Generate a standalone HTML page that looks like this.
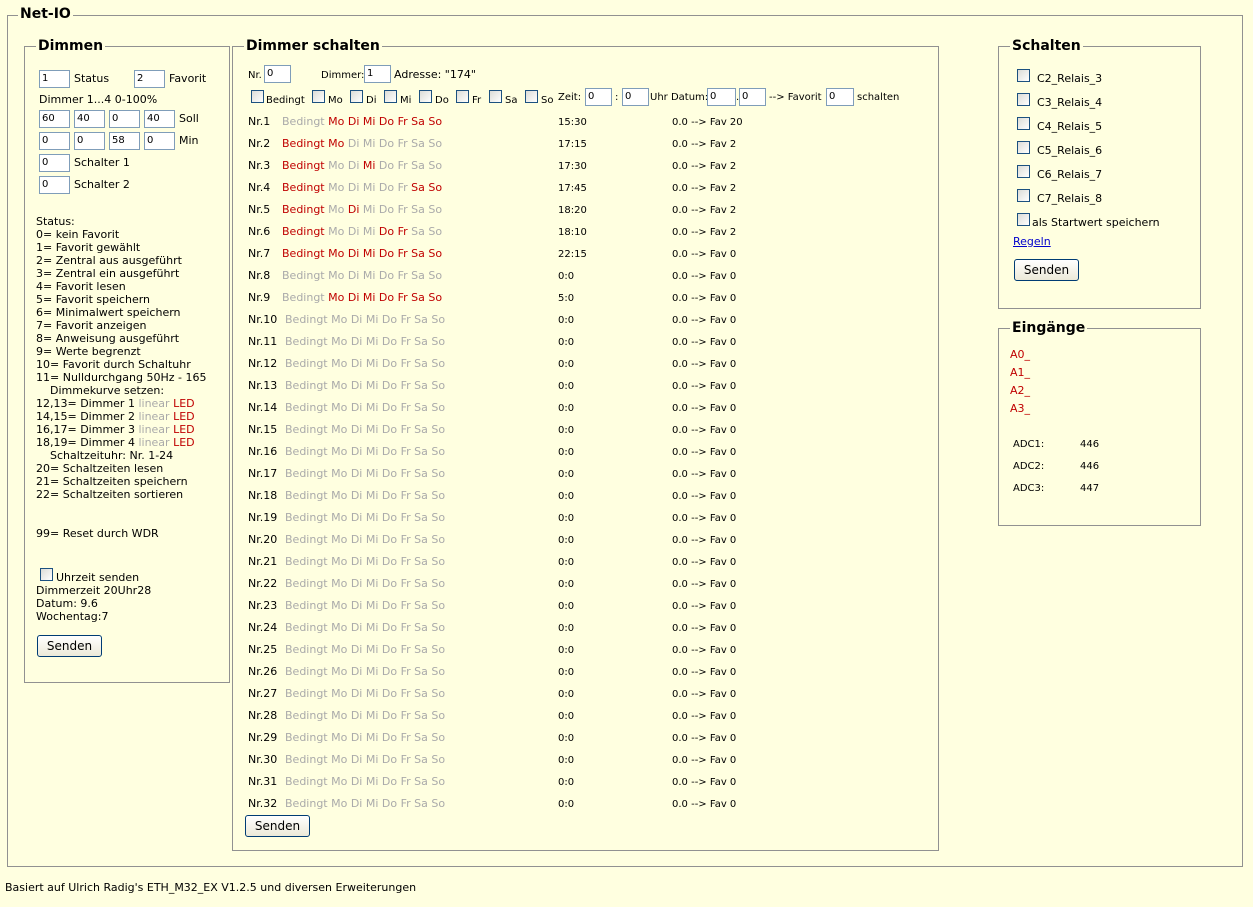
<!DOCTYPE html>
<html><head><meta charset="utf-8"><style>
body{margin:0;width:1253px;height:907px;background:#ffffe0;font-family:"DejaVu Sans","Liberation Sans",sans-serif;font-size:11px;color:#000;position:relative;overflow:hidden}
.fs{position:absolute;border:1px solid #919191;box-sizing:border-box}
.lg{position:absolute;background:#ffffe0;padding:0 2px;font-weight:bold;font-size:14px;line-height:16px;white-space:nowrap}
.t{position:absolute;white-space:nowrap;line-height:13px}
.in{position:absolute;border:1px solid #7f9db9;background:#fff;box-sizing:border-box;height:18px;font-size:10px;line-height:16px;padding-left:2px}
.cb{position:absolute;width:13px;height:13px;border:1px solid #1c5180;background:linear-gradient(135deg,#dcdcd7,#fff);box-sizing:border-box}
.btn{position:absolute;border:1px solid #003c74;border-radius:3px;background:linear-gradient(#fff,#ece9d8);font-size:12px;text-align:center;line-height:20px;height:22px;box-sizing:border-box}
.g{color:#aaa}.r{color:#c00000}
</style></head><body>
<div class="fs" style="left:7px;top:15px;width:1236px;height:852px"></div>
<div class="lg" style="left:18px;top:6px">Net-IO</div>

<!-- Dimmen -->
<div class="fs" style="left:24px;top:46px;width:206px;height:637px"></div>
<div class="lg" style="left:36px;top:38px">Dimmen</div>
<div class="in" style="left:39px;top:70px;width:31px">1</div><div class="t" style="left:74px;top:72px">Status</div>
<div class="in" style="left:134px;top:70px;width:31px">2</div><div class="t" style="left:169px;top:72px">Favorit</div>
<div class="t" style="left:39px;top:93px">Dimmer 1...4 0-100%</div>
<div class="in" style="left:39px;top:110px;width:31px">60</div><div class="in" style="left:74px;top:110px;width:31px">40</div><div class="in" style="left:109px;top:110px;width:31px">0</div><div class="in" style="left:144px;top:110px;width:31px">40</div><div class="t" style="left:179px;top:112px">Soll</div>
<div class="in" style="left:39px;top:132px;width:31px">0</div><div class="in" style="left:74px;top:132px;width:31px">0</div><div class="in" style="left:109px;top:132px;width:31px">58</div><div class="in" style="left:144px;top:132px;width:31px">0</div><div class="t" style="left:179px;top:134px">Min</div>
<div class="in" style="left:39px;top:154px;width:31px">0</div><div class="t" style="left:74px;top:156px">Schalter 1</div>
<div class="in" style="left:39px;top:176px;width:31px">0</div><div class="t" style="left:74px;top:178px">Schalter 2</div>
<div class="t" style="left:36px;top:215px">Status:<br>0= kein Favorit<br>1= Favorit gewählt<br>2= Zentral aus ausgeführt<br>3= Zentral ein ausgeführt<br>4= Favorit lesen<br>5= Favorit speichern<br>6= Minimalwert speichern<br>7= Favorit anzeigen<br>8= Anweisung ausgeführt<br>9= Werte begrenzt<br>10= Favorit durch Schaltuhr<br>11= Nulldurchgang 50Hz - 165<br>&nbsp;&nbsp;&nbsp;&nbsp;Dimmekurve setzen:<br>12,13= Dimmer 1 <span class="g">linear</span> <span class="r">LED</span><br>14,15= Dimmer 2 <span class="g">linear</span> <span class="r">LED</span><br>16,17= Dimmer 3 <span class="g">linear</span> <span class="r">LED</span><br>18,19= Dimmer 4 <span class="g">linear</span> <span class="r">LED</span><br>&nbsp;&nbsp;&nbsp;&nbsp;Schaltzeituhr: Nr. 1-24<br>20= Schaltzeiten lesen<br>21= Schaltzeiten speichern<br>22= Schaltzeiten sortieren</div>
<div class="t" style="left:36px;top:527px">99= Reset durch WDR</div>
<div class="cb" style="left:40px;top:568px"></div><div class="t" style="left:56px;top:571px">Uhrzeit senden</div>
<div class="t" style="left:36px;top:584px">Dimmerzeit 20Uhr28<br>Datum: 9.6<br>Wochentag:7</div>
<div class="btn" style="left:37px;top:635px;width:65px">Senden</div>

<!-- Dimmer schalten -->
<div class="fs" style="left:232px;top:46px;width:707px;height:805px"></div>
<div class="lg" style="left:244px;top:38px">Dimmer schalten</div>
<div class="t" style="left:248px;top:69px;font-size:10px">Nr.</div><div class="in" style="left:264px;top:65px;width:27px">0</div>
<div class="t" style="left:321px;top:69px;font-size:10px">Dimmer:</div><div class="in" style="left:364px;top:65px;width:27px">1</div>
<div class="t" style="left:394px;top:68px">Adresse: "174"</div>
<div class="cb" style="left:251px;top:90px"></div><div class="t" style="left:266px;top:94px;font-size:10px">Bedingt</div>
<div class="cb" style="left:312px;top:90px"></div><div class="t" style="left:328px;top:94px;font-size:10px">Mo</div>
<div class="cb" style="left:350px;top:90px"></div><div class="t" style="left:366px;top:94px;font-size:10px">Di</div>
<div class="cb" style="left:384px;top:90px"></div><div class="t" style="left:400px;top:94px;font-size:10px">Mi</div>
<div class="cb" style="left:419px;top:90px"></div><div class="t" style="left:435px;top:94px;font-size:10px">Do</div>
<div class="cb" style="left:456px;top:90px"></div><div class="t" style="left:472px;top:94px;font-size:10px">Fr</div>
<div class="cb" style="left:489px;top:90px"></div><div class="t" style="left:505px;top:94px;font-size:10px">Sa</div>
<div class="cb" style="left:525px;top:90px"></div><div class="t" style="left:541px;top:94px;font-size:10px">So</div>
<div class="t" style="left:558px;top:91px;font-size:10px">Zeit:</div><div class="in" style="left:585px;top:88px;width:27px">0</div>
<div class="t" style="left:615px;top:91px;font-size:10px">:</div><div class="in" style="left:622px;top:88px;width:27px">0</div>
<div class="t" style="left:650px;top:91px;font-size:10px">Uhr Datum:</div><div class="in" style="left:707px;top:88px;width:29px">0</div>
<div class="t" style="left:736px;top:91px;font-size:10px">.</div><div class="in" style="left:739px;top:88px;width:27px">0</div>
<div class="t" style="left:769px;top:91px;font-size:10px">--&gt; Favorit</div><div class="in" style="left:826px;top:88px;width:28px">0</div>
<div class="t" style="left:857px;top:91px;font-size:10px">schalten</div>

<div class="t" style="left:248px;top:111px;line-height:22px">Nr.1<br>Nr.2<br>Nr.3<br>Nr.4<br>Nr.5<br>Nr.6<br>Nr.7<br>Nr.8<br>Nr.9<br>Nr.10<br>Nr.11<br>Nr.12<br>Nr.13<br>Nr.14<br>Nr.15<br>Nr.16<br>Nr.17<br>Nr.18<br>Nr.19<br>Nr.20<br>Nr.21<br>Nr.22<br>Nr.23<br>Nr.24<br>Nr.25<br>Nr.26<br>Nr.27<br>Nr.28<br>Nr.29<br>Nr.30<br>Nr.31<br>Nr.32</div>
<div class="t" style="left:282px;top:111px;line-height:22px"><span class="g">Bedingt</span> <span class="r">Mo Di Mi Do Fr Sa So</span><br><span class="r">Bedingt Mo</span> <span class="g">Di Mi Do Fr Sa So</span><br><span class="r">Bedingt</span> <span class="g">Mo Di</span> <span class="r">Mi</span> <span class="g">Do Fr Sa So</span><br><span class="r">Bedingt</span> <span class="g">Mo Di Mi Do Fr</span> <span class="r">Sa So</span><br><span class="r">Bedingt</span> <span class="g">Mo</span> <span class="r">Di</span> <span class="g">Mi Do Fr Sa So</span><br><span class="r">Bedingt</span> <span class="g">Mo Di Mi</span> <span class="r">Do Fr</span> <span class="g">Sa So</span><br><span class="r">Bedingt Mo Di Mi Do Fr Sa So</span><br><span class="g">Bedingt Mo Di Mi Do Fr Sa So</span><br><span class="g">Bedingt</span> <span class="r">Mo Di Mi Do Fr Sa So</span></div>
<div class="t g" style="left:285px;top:309px;line-height:22px">Bedingt Mo Di Mi Do Fr Sa So<br>Bedingt Mo Di Mi Do Fr Sa So<br>Bedingt Mo Di Mi Do Fr Sa So<br>Bedingt Mo Di Mi Do Fr Sa So<br>Bedingt Mo Di Mi Do Fr Sa So<br>Bedingt Mo Di Mi Do Fr Sa So<br>Bedingt Mo Di Mi Do Fr Sa So<br>Bedingt Mo Di Mi Do Fr Sa So<br>Bedingt Mo Di Mi Do Fr Sa So<br>Bedingt Mo Di Mi Do Fr Sa So<br>Bedingt Mo Di Mi Do Fr Sa So<br>Bedingt Mo Di Mi Do Fr Sa So<br>Bedingt Mo Di Mi Do Fr Sa So<br>Bedingt Mo Di Mi Do Fr Sa So<br>Bedingt Mo Di Mi Do Fr Sa So<br>Bedingt Mo Di Mi Do Fr Sa So<br>Bedingt Mo Di Mi Do Fr Sa So<br>Bedingt Mo Di Mi Do Fr Sa So<br>Bedingt Mo Di Mi Do Fr Sa So<br>Bedingt Mo Di Mi Do Fr Sa So<br>Bedingt Mo Di Mi Do Fr Sa So<br>Bedingt Mo Di Mi Do Fr Sa So<br>Bedingt Mo Di Mi Do Fr Sa So</div>
<div class="t" style="left:558px;top:112px;line-height:22px;font-size:10px">15:30<br>17:15<br>17:30<br>17:45<br>18:20<br>18:10<br>22:15<br>0:0<br>5:0<br>0:0<br>0:0<br>0:0<br>0:0<br>0:0<br>0:0<br>0:0<br>0:0<br>0:0<br>0:0<br>0:0<br>0:0<br>0:0<br>0:0<br>0:0<br>0:0<br>0:0<br>0:0<br>0:0<br>0:0<br>0:0<br>0:0<br>0:0</div>
<div class="t" style="left:672px;top:112px;line-height:22px;font-size:10px">0.0 --&gt; Fav 20<br>0.0 --&gt; Fav 2<br>0.0 --&gt; Fav 2<br>0.0 --&gt; Fav 2<br>0.0 --&gt; Fav 2<br>0.0 --&gt; Fav 2<br>0.0 --&gt; Fav 0<br>0.0 --&gt; Fav 0<br>0.0 --&gt; Fav 0<br>0.0 --&gt; Fav 0<br>0.0 --&gt; Fav 0<br>0.0 --&gt; Fav 0<br>0.0 --&gt; Fav 0<br>0.0 --&gt; Fav 0<br>0.0 --&gt; Fav 0<br>0.0 --&gt; Fav 0<br>0.0 --&gt; Fav 0<br>0.0 --&gt; Fav 0<br>0.0 --&gt; Fav 0<br>0.0 --&gt; Fav 0<br>0.0 --&gt; Fav 0<br>0.0 --&gt; Fav 0<br>0.0 --&gt; Fav 0<br>0.0 --&gt; Fav 0<br>0.0 --&gt; Fav 0<br>0.0 --&gt; Fav 0<br>0.0 --&gt; Fav 0<br>0.0 --&gt; Fav 0<br>0.0 --&gt; Fav 0<br>0.0 --&gt; Fav 0<br>0.0 --&gt; Fav 0<br>0.0 --&gt; Fav 0</div>
<div class="btn" style="left:245px;top:815px;width:65px">Senden</div>

<!-- Schalten -->
<div class="fs" style="left:998px;top:46px;width:203px;height:263px"></div>
<div class="lg" style="left:1010px;top:38px">Schalten</div>
<div class="cb" style="left:1017px;top:69px"></div><div class="t" style="left:1037px;top:72px">C2_Relais_3</div>
<div class="cb" style="left:1017px;top:93px"></div><div class="t" style="left:1037px;top:96px">C3_Relais_4</div>
<div class="cb" style="left:1017px;top:117px"></div><div class="t" style="left:1037px;top:120px">C4_Relais_5</div>
<div class="cb" style="left:1017px;top:141px"></div><div class="t" style="left:1037px;top:144px">C5_Relais_6</div>
<div class="cb" style="left:1017px;top:165px"></div><div class="t" style="left:1037px;top:168px">C6_Relais_7</div>
<div class="cb" style="left:1017px;top:189px"></div><div class="t" style="left:1037px;top:192px">C7_Relais_8</div>
<div class="cb" style="left:1017px;top:213px"></div><div class="t" style="left:1032px;top:216px">als Startwert speichern</div>
<div class="t" style="left:1013px;top:235px;color:#00c;text-decoration:underline">Regeln</div>
<div class="btn" style="left:1014px;top:259px;width:65px">Senden</div>

<!-- Eingänge -->
<div class="fs" style="left:998px;top:328px;width:203px;height:198px"></div>
<div class="lg" style="left:1010px;top:320px">Eingänge</div>
<div class="t r" style="left:1010px;top:346px;line-height:18px">A0_<br>A1_<br>A2_<br>A3_</div>
<div class="t" style="left:1013px;top:434px;line-height:22px;font-size:10px">ADC1:<br>ADC2:<br>ADC3:</div>
<div class="t" style="left:1080px;top:434px;line-height:22px;font-size:10px">446<br>446<br>447</div>

<div class="t" style="left:5px;top:881px">Basiert auf Ulrich Radig's ETH_M32_EX V1.2.5 und diversen Erweiterungen</div>
</body></html>
